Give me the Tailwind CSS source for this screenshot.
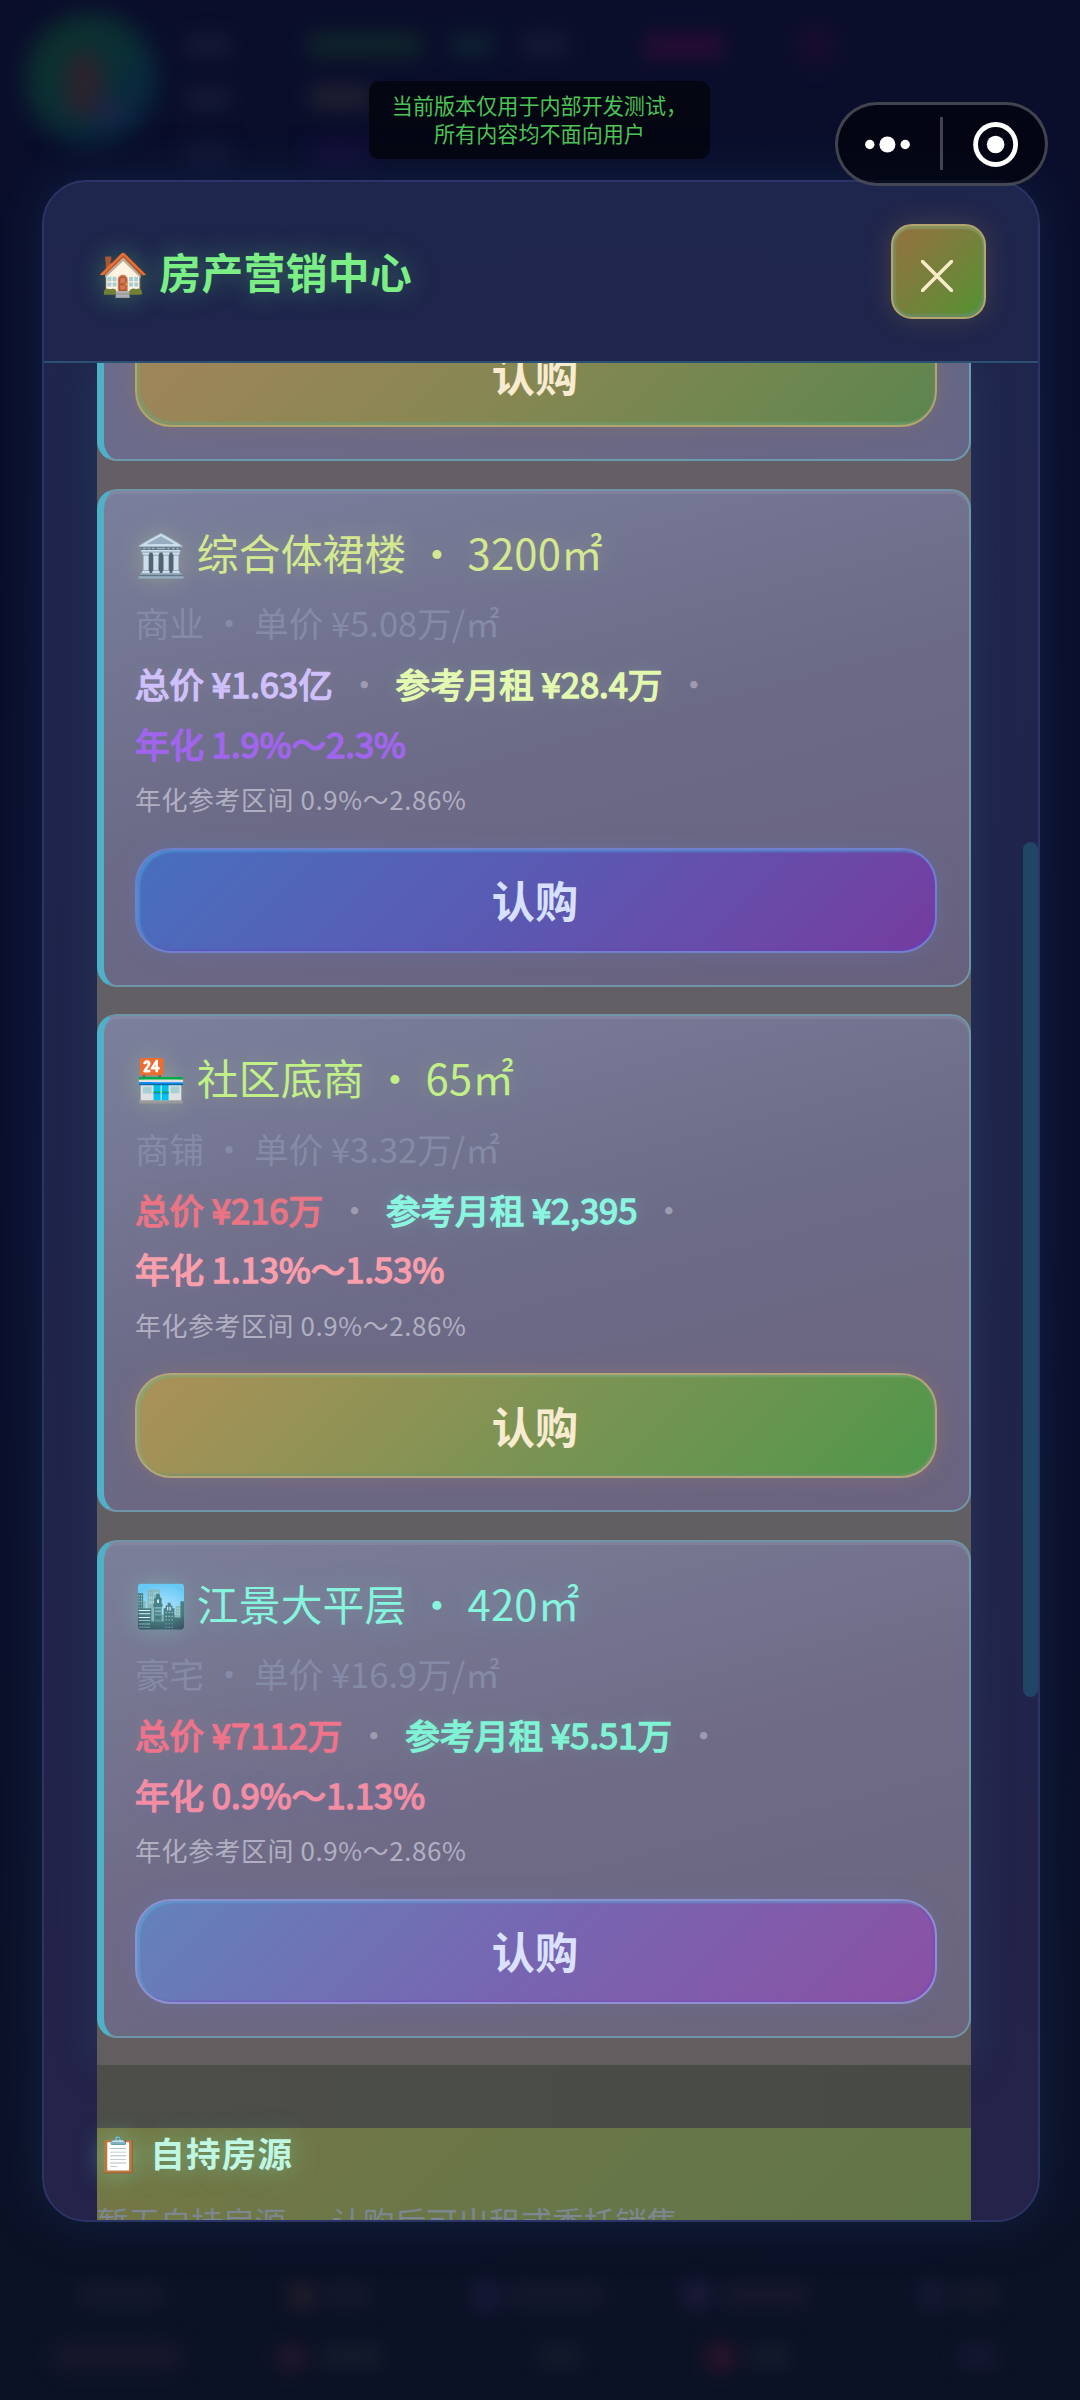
<!DOCTYPE html>
<html lang="zh-CN">
<head>
<meta charset="utf-8">
<title>房产营销中心</title>
<script src="https://cdn.jsdelivr.net/npm/@tailwindcss/browser@4"></script>
</head>
<body class="relative h-[2400px] w-[1080px] overflow-hidden bg-linear-to-b from-[#0a0e2b] via-[#0b0f2e] to-[#0c1225] font-['Noto_Sans_CJK_SC','Noto_Color_Emoji',sans-serif]">

  <!-- dimmed page behind the dialog -->
  <div class="absolute inset-0 opacity-85 blur-[7px]" aria-hidden="true">
    <div class="absolute left-[26px] top-[14px] h-[130px] w-[130px] rounded-full bg-linear-to-br from-[#0f3a2a] via-[#0b3636] to-[#0b2650] blur-[10px]"></div>
    <div class="absolute left-[66px] top-[52px] h-[66px] w-[38px] rounded-full bg-[#32282e] blur-[8px]"></div>
    <div class="absolute left-[90px] top-[98px] h-[26px] w-[34px] rounded-full bg-[#22284a] blur-[9px]"></div>
    <div class="absolute left-[186px] top-[34px] h-[22px] w-[44px] rounded bg-[#181c38] blur-[6px]"></div>
    <div class="absolute left-[186px] top-[88px] h-[22px] w-[44px] rounded bg-[#181c38] blur-[6px]"></div>
    <div class="absolute left-[186px] top-[142px] h-[22px] w-[44px] rounded bg-[#161a3a] blur-[8px]"></div>
    <div class="absolute left-[308px] top-[32px] h-[26px] w-[114px] rounded bg-[#11272a] blur-[7px]"></div>
    <div class="absolute left-[450px] top-[32px] h-[26px] w-[44px] rounded bg-[#0e2230] blur-[7px]"></div>
    <div class="absolute left-[522px] top-[32px] h-[26px] w-[46px] rounded bg-[#161a38] blur-[7px]"></div>
    <div class="absolute left-[644px] top-[32px] h-[28px] w-[80px] rounded bg-[#2a0c36] blur-[7px]"></div>
    <div class="absolute left-[798px] top-[26px] h-[38px] w-[36px] rounded bg-[#1c0d30] blur-[8px]"></div>
    <div class="absolute left-[310px] top-[84px] h-[26px] w-[60px] rounded bg-[#222230] blur-[7px]"></div>
    <div class="absolute left-[310px] top-[142px] h-[22px] w-[60px] rounded bg-[#180f3c] blur-[9px]"></div>

    <div class="absolute left-[78px] top-[2284px] h-[22px] w-[86px] rounded bg-[#171b30] blur-[7px]"></div>
    <div class="absolute left-[290px] top-[2284px] h-[24px] w-[24px] rounded bg-[#28232c] blur-[7px]"></div>
    <div class="absolute left-[324px] top-[2284px] h-[22px] w-[46px] rounded bg-[#171a30] blur-[7px]"></div>
    <div class="absolute left-[474px] top-[2282px] h-[28px] w-[26px] rounded bg-[#1a1c3e] blur-[7px]"></div>
    <div class="absolute left-[508px] top-[2284px] h-[22px] w-[96px] rounded bg-[#171b30] blur-[7px]"></div>
    <div class="absolute left-[684px] top-[2282px] h-[26px] w-[26px] rounded bg-[#201d40] blur-[7px]"></div>
    <div class="absolute left-[722px] top-[2284px] h-[22px] w-[86px] rounded bg-[#1a1a30] blur-[7px]"></div>
    <div class="absolute left-[920px] top-[2282px] h-[26px] w-[26px] rounded bg-[#191d38] blur-[7px]"></div>
    <div class="absolute left-[954px] top-[2284px] h-[22px] w-[46px] rounded bg-[#171b2e] blur-[7px]"></div>
    <div class="absolute left-[54px] top-[2344px] h-[24px] w-[128px] rounded bg-[#1b1a2f] blur-[8px]"></div>
    <div class="absolute left-[278px] top-[2346px] h-[24px] w-[28px] rounded bg-[#281830] blur-[7px]"></div>
    <div class="absolute left-[322px] top-[2344px] h-[24px] w-[60px] rounded bg-[#171d2f] blur-[7px]"></div>
    <div class="absolute left-[540px] top-[2344px] h-[24px] w-[40px] rounded bg-[#171d2f] blur-[7px]"></div>
    <div class="absolute left-[708px] top-[2344px] h-[26px] w-[26px] rounded bg-[#35152c] blur-[7px]"></div>
    <div class="absolute left-[750px] top-[2344px] h-[24px] w-[40px] rounded bg-[#171d2f] blur-[7px]"></div>
    <div class="absolute left-[960px] top-[2344px] h-[24px] w-[36px] rounded bg-[#171a34] blur-[7px]"></div>
  </div>

  <!-- dialog -->
  <main class="relative mt-[180px] ml-[42px] flex h-[2042px] w-[998px] flex-col overflow-hidden rounded-[44px] border-2 border-[#2b3565] bg-linear-to-b from-[#1f264d] via-[#1f244b] to-[#25234a] shadow-[0_0_46px_rgba(24,52,92,0.5)]">
    <header class="flex h-[181px] shrink-0 items-center justify-between border-b-2 border-[#2c4f74] pl-[53px] pr-[52px]">
      <h1 class="pb-[2px] text-[41.76px] font-bold leading-[60px] tracking-[0.4px] text-[#7bee86] [text-shadow:0_0_26px_rgba(100,240,130,0.35)]">🏠 房产营销中心</h1>
      <button class="flex size-[95px] items-center justify-center rounded-[21px] border-2 border-[#b3a56b] bg-linear-to-br from-[#95703f] via-[#76803b] to-[#509330] pt-[9px] pr-[3px] shadow-[0_0_26px_rgba(200,150,60,0.22),inset_0_3px_2px_rgba(140,160,110,0.7),inset_3px_0_2px_rgba(110,160,120,0.5),inset_-2px_-3px_2px_rgba(110,140,120,0.6)]" aria-label="关闭">
        <svg class="size-8" viewBox="0 0 32 32" fill="none" stroke="#f8ebc8" stroke-width="3.6" stroke-linecap="round"><path d="M1.5 1.5 30.5 30.5M30.5 1.5 1.5 30.5"/></svg>
      </button>
    </header>

    <div class="relative min-h-0 flex-1 overflow-hidden pl-[53px]">
      <div class="w-[874px]">
        <section class="flex flex-col gap-[27.5px] bg-linear-to-b from-[#645f66] via-[#626064] to-[#625d5f] pb-[27.5px] shadow-[0_0_36px_rgba(48,80,112,0.4)]">

          <article class="h-[98px] overflow-hidden rounded-b-[20px] border-b-2 border-l-[7px] border-r-2 border-b-[#6c9aac] border-l-[#4fb1c8] border-r-[#6f9bb0] bg-linear-to-r from-[#6c6b8b] via-[#6c6984] to-[#666687] pl-[31px] pr-[32px]">
            <button class="-mt-[41px] flex h-[105px] w-full items-center justify-center rounded-[36px] border-2 border-[#b3a56b] bg-linear-135 from-[#a2855a] via-[#858752] to-[#5c864e] pr-[2px] pb-[2px] text-[43.2px] font-bold leading-none text-[#f8ebd0] shadow-[0_0_20px_rgba(170,130,80,0.3),inset_3px_-3px_2px_rgba(110,165,120,0.55),inset_-2px_0_2px_rgba(110,130,120,0.5)]">认购</button>
          </article>

          <article class="h-[498px] rounded-[20px] border-2 border-l-[7px] border-[#7095a9] border-l-[#4fb1c8] bg-linear-165 from-[#7a7f9d] via-[#6c6b87] to-[#68617e] pt-[27px] pl-[31px] pr-[32px] shadow-[inset_0_3px_0_rgba(150,150,175,0.35)]">
            <h2 class="text-[41.76px] leading-[68px] tracking-[0.2px] text-[#d4e98f] [text-shadow:0_0_24px_rgba(200,235,140,0.32)]">🏛️ 综合体裙楼 · 3200㎡</h2>
            <p class="mt-[4.5px] text-[34.56px] leading-[64px] text-[#858ba6]">商业 · 单价 ¥5.08万/㎡</p>
            <div class="flex flex-wrap gap-x-[14.2px] text-[34.56px] leading-[59.5px]">
              <span class="text-[#cfc0fb] [-webkit-text-stroke:1.5px_currentColor] [text-shadow:0_0_16px_rgba(190,170,170,0.35)]">总价 ¥1.63亿</span><span class="text-[#9d9bb0]">·</span><span class="text-[#e4f9b0] [-webkit-text-stroke:1.5px_currentColor] [text-shadow:0_0_16px_rgba(160,220,160,0.4)]">参考月租 ¥28.4万</span><span class="text-[#9d9bb0]">·</span>
              <span class="text-[#a065ec] [-webkit-text-stroke:1.5px_currentColor]">年化 1.9%～2.3%</span>
            </div>
            <p class="mt-[3px] text-[25.92px] leading-[46px] tracking-[0.6px] text-[#b1b0c2]">年化参考区间 0.9%～2.86%</p>
            <button class="mt-[25.5px] flex h-[105px] w-full items-center justify-center rounded-[36px] border-2 border-[#7080cc] bg-linear-135 from-[#476fbe] via-[#5b58b2] to-[#743c9f] pr-[2px] text-[43.2px] font-bold leading-none text-[#d7e1ff] shadow-[0_0_20px_rgba(100,120,190,0.35),inset_3px_2px_2px_rgba(75,160,220,0.6),inset_-2px_-1px_2px_rgba(110,60,200,0.6)]">认购</button>
          </article>

          <article class="h-[498px] rounded-[20px] border-2 border-l-[7px] border-[#7095a9] border-l-[#4fb1c8] bg-linear-165 from-[#7c809d] via-[#6c6b87] to-[#6b637f] pt-[27px] pl-[31px] pr-[32px] shadow-[inset_0_3px_0_rgba(150,150,175,0.35)]">
            <h2 class="text-[41.76px] leading-[68px] tracking-[0.2px] text-[#c1f087] [text-shadow:0_0_24px_rgba(180,235,140,0.32)]">🏪 社区底商 · 65㎡</h2>
            <p class="mt-[4.5px] text-[34.56px] leading-[64px] text-[#858ba6]">商铺 · 单价 ¥3.32万/㎡</p>
            <div class="flex flex-wrap gap-x-[14.2px] text-[34.56px] leading-[59.5px]">
              <span class="text-[#ea7384] [-webkit-text-stroke:1.5px_currentColor] [text-shadow:0_0_16px_rgba(190,150,140,0.35)]">总价 ¥216万</span><span class="text-[#9d9bb0]">·</span><span class="text-[#8bf6e0] [-webkit-text-stroke:1.5px_currentColor] [text-shadow:0_0_16px_rgba(120,220,210,0.4)]">参考月租 ¥2,395</span><span class="text-[#9d9bb0]">·</span>
              <span class="text-[#fa9eab] [-webkit-text-stroke:1.5px_currentColor] [text-shadow:0_0_16px_rgba(190,140,190,0.3)]">年化 1.13%～1.53%</span>
            </div>
            <p class="mt-[3px] text-[25.92px] leading-[46px] tracking-[0.6px] text-[#b1b0c2]">年化参考区间 0.9%～2.86%</p>
            <button class="mt-[25.5px] flex h-[105px] w-full items-center justify-center rounded-[36px] border-2 border-[#b5a578] bg-linear-135 from-[#ac9158] via-[#7c9353] to-[#4d974a] pr-[2px] text-[43.2px] font-bold leading-none text-[#f8ebd0] shadow-[0_0_20px_rgba(170,130,100,0.35),inset_3px_2px_2px_rgba(120,175,130,0.6),inset_-2px_-2px_2px_rgba(110,150,110,0.7)]">认购</button>
          </article>

          <article class="h-[498px] rounded-[20px] border-2 border-l-[7px] border-[#7095a9] border-l-[#4fb1c8] bg-linear-165 from-[#7c7f99] via-[#6f6b87] to-[#6b647b] pt-[27px] pl-[31px] pr-[32px] shadow-[inset_0_3px_0_rgba(150,150,175,0.35)]">
            <h2 class="text-[41.76px] leading-[68px] tracking-[0.2px] text-[#86f5de] [text-shadow:0_0_24px_rgba(120,235,215,0.32)]">🏙️ 江景大平层 · 420㎡</h2>
            <p class="mt-[4.5px] text-[34.56px] leading-[64px] text-[#858ba6]">豪宅 · 单价 ¥16.9万/㎡</p>
            <div class="flex flex-wrap gap-x-[14.2px] text-[34.56px] leading-[59.5px]">
              <span class="text-[#ee738b] [-webkit-text-stroke:1.5px_currentColor] [text-shadow:0_0_16px_rgba(190,150,140,0.35)]">总价 ¥7112万</span><span class="text-[#9d9bb0]">·</span><span class="text-[#7ff3d3] [-webkit-text-stroke:1.5px_currentColor] [text-shadow:0_0_16px_rgba(120,220,190,0.4)]">参考月租 ¥5.51万</span><span class="text-[#9d9bb0]">·</span>
              <span class="text-[#f38da3] [-webkit-text-stroke:1.5px_currentColor] [text-shadow:0_0_16px_rgba(130,120,210,0.35)]">年化 0.9%～1.13%</span>
            </div>
            <p class="mt-[3px] text-[25.92px] leading-[46px] tracking-[0.6px] text-[#b1b0c2]">年化参考区间 0.9%～2.86%</p>
            <button class="mt-[25.5px] flex h-[105px] w-full items-center justify-center rounded-[36px] border-2 border-[#8f90cf] bg-linear-135 from-[#6282bb] via-[#7765b1] to-[#8a50a4] pr-[2px] text-[43.2px] font-bold leading-none text-[#dbe2ff] shadow-[0_0_20px_rgba(110,120,180,0.35),inset_3px_2px_2px_rgba(90,165,215,0.6),inset_-2px_-1px_2px_rgba(120,70,200,0.6)]">认购</button>
          </article>
        </section>

        <div class="h-[63px] bg-linear-to-r from-[#4c4e47] to-[#484b45]"></div>

        <section class="h-[200px] bg-linear-135 from-[#757744] via-[#687648] to-[#607547]">
          <h2 class="text-[34.56px] font-bold leading-[49px] tracking-[1.2px] text-[#bff7e3] [text-shadow:0_0_26px_rgba(120,235,190,0.5)]">📋 自持房源</h2>
          <p class="mt-[20px] text-[31.68px] leading-[48px] tracking-[-0.15px] text-[#7c8792]">暂无自持房源 — 认购后可出租或委托销售</p>
        </section>
      </div>

      <!-- scrollbar thumb -->
      <div class="absolute right-0 top-[479px] h-[855px] w-[15px] rounded-full bg-[#214565]"></div>
    </div>
  </main>

  <!-- build notice -->
  <div class="absolute left-[369px] top-[81px] flex h-[78px] w-[341px] flex-col items-center justify-center rounded-[10px] bg-[#03050f]/90 pb-[2px] text-center text-[21.1px] leading-[28px] text-[#4cc355]">
    <span>当前版本仅用于内部开发测试，</span>
    <span>所有内容均不面向用户</span>
  </div>

  <!-- mini program capsule -->
  <div class="absolute left-[835px] top-[102px] flex h-[84px] w-[213px] items-center rounded-full border-3 border-white/25 bg-[#01030c]/75">
    <svg class="h-full w-full" viewBox="0 0 207 78" fill="#fff">
      <circle cx="31.8" cy="39.5" r="4.7"/><circle cx="49.4" cy="39.5" r="8"/><circle cx="67.2" cy="39.5" r="4.7"/>
      <rect x="102" y="12" width="3" height="53" fill-opacity=".25"/>
      <circle cx="157.6" cy="39.5" r="20" fill="none" stroke="#fff" stroke-width="4.8"/><circle cx="157.6" cy="39.5" r="8.8"/>
    </svg>
  </div>
</body>
</html>
